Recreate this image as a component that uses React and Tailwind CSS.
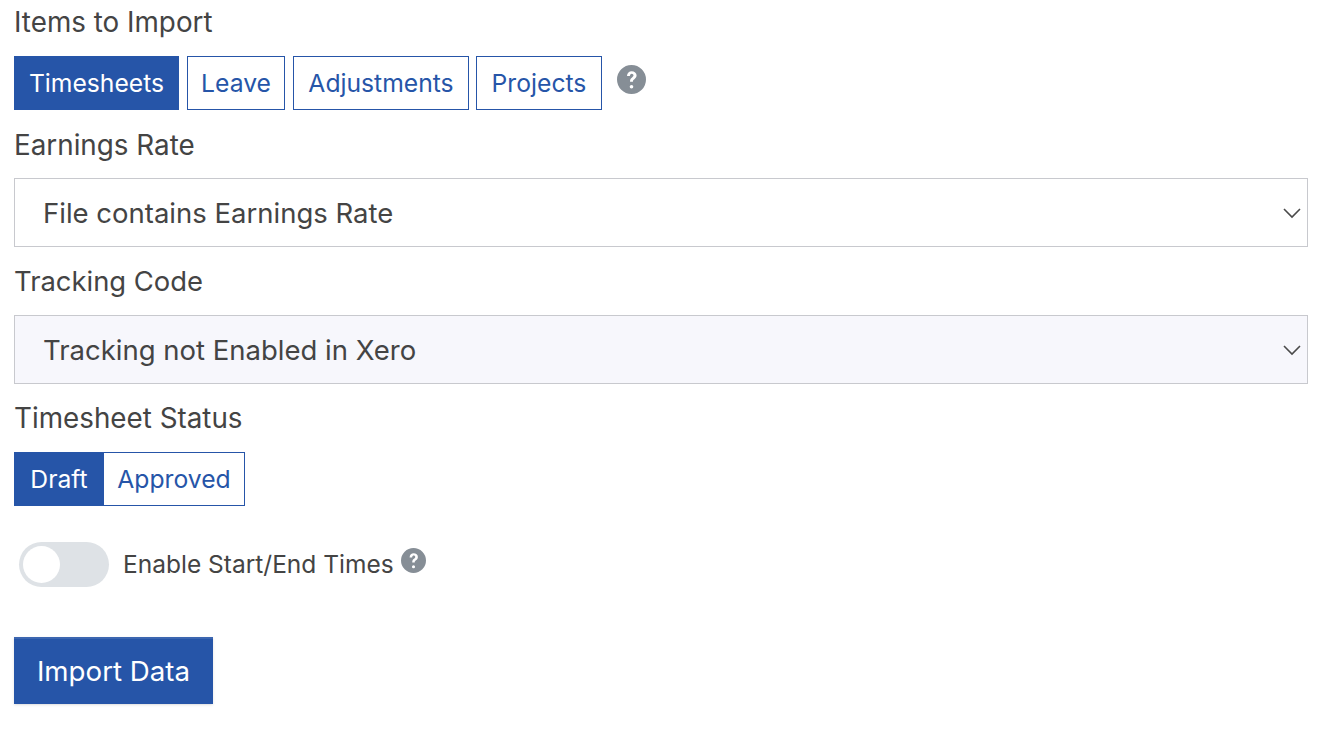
function HelpIcon({ className }) {
  return (
    <svg viewBox="0 0 16 16" className={className}>
      <path
        fill="#868e96"
        d="M16 8A8 8 0 1 1 0 8a8 8 0 0 1 16 0zM5.5 6h1.6c.1-.8.6-1.2 1-1.2.6 0 1 .4 1 .9 0 .5-.2.7-.8 1.2-.7.5-1.1 1.1-1.1 2v.3h1.6V9c0-.5.2-.7.8-1.2.7-.5 1.2-1.1 1.2-2.1 0-1.400-1.200-2.300-2.700-2.300C6.700 3.400 5.600 4.300 5.500 6zM8 13a1 1 0 1 0 0-2 1 1 0 0 0 0 2z"
      />
    </svg>
  );
}

function Chevron() {
  return (
    <svg viewBox="0 0 18 12" className="w-[18px] h-[12px] shrink-0" fill="none" stroke="#4a4a4a" strokeWidth="1.6">
      <path d="M1 2l8 8 8-8" />
    </svg>
  );
}

function Toggle({ label, active, className = '' }) {
  return (
    <button
      className={`h-[54px] border border-[#2655a8] text-[24.7px] leading-none ${
        active ? 'bg-[#2655a8] text-white' : 'bg-white text-[#2655a8]'
      } ${className}`}
    >
      {label}
    </button>
  );
}

function Select({ value, tinted }) {
  return (
    <div
      className={`h-[69px] flex items-center justify-between pl-[28px] pr-[6px] border border-[#c8c9ce] text-[27.5px] text-[#444444] ${
        tinted ? 'bg-[#f7f7fc]' : 'bg-white'
      }`}
    >
      <span className="pt-[2px]">{value}</span>
      <Chevron />
    </div>
  );
}

export default function App() {
  return (
    <div className="w-[1330px] h-[730px] bg-white pl-[14px] pr-[22px] overflow-hidden font-['Inter',sans-serif] text-[#444444]">
      <div className="h-[56px] pt-[4px] text-[27.8px] leading-[36px]">Items to Import</div>
      <div className="flex items-start">
        <Toggle label="Timesheets" active className="w-[165px]" />
        <Toggle label="Leave" className="ml-2 w-[98px]" />
        <Toggle label="Adjustments" className="ml-2 w-[176px]" />
        <Toggle label="Projects" className="ml-[7px] w-[126px]" />
        <HelpIcon className="w-[29px] h-[29px] ml-[15px] mt-[9px]" />
      </div>

      <div className="h-[68px] pt-[17px] text-[27.8px] leading-[36px]">Earnings Rate</div>
      <Select value="File contains Earnings Rate" />

      <div className="h-[68px] pt-[16px] text-[27.4px] leading-[36px]">Tracking Code</div>
      <Select value="Tracking not Enabled in Xero" tinted />

      <div className="h-[68px] pt-[16px] text-[27.8px] leading-[36px]">Timesheet Status</div>
      <div className="flex">
        <Toggle label="Draft" active className="w-[90px]" />
        <Toggle label="Approved" className="border-l-0 w-[141px]" />
      </div>

      <div className="flex items-start mt-[36px] ml-[5px]">
        <div className="w-[90px] h-[45px] rounded-full bg-[#dee2e6] p-[4px]">
          <div className="w-[37px] h-[37px] rounded-full bg-white" />
        </div>
        <span className="ml-[14px] mt-[5px] text-[24.5px] leading-[34px]">Enable Start/End Times</span>
        <HelpIcon className="w-[25px] h-[25px] ml-[7px] mt-[6px]" />
      </div>

      <button className="block mt-[50px] pt-[1px] h-[67px] w-[199px] bg-[#2655a8] border-t-2 border-[#3c66b0] text-white text-[27.7px] shadow-sm">
        Import Data
      </button>
    </div>
  );
}
